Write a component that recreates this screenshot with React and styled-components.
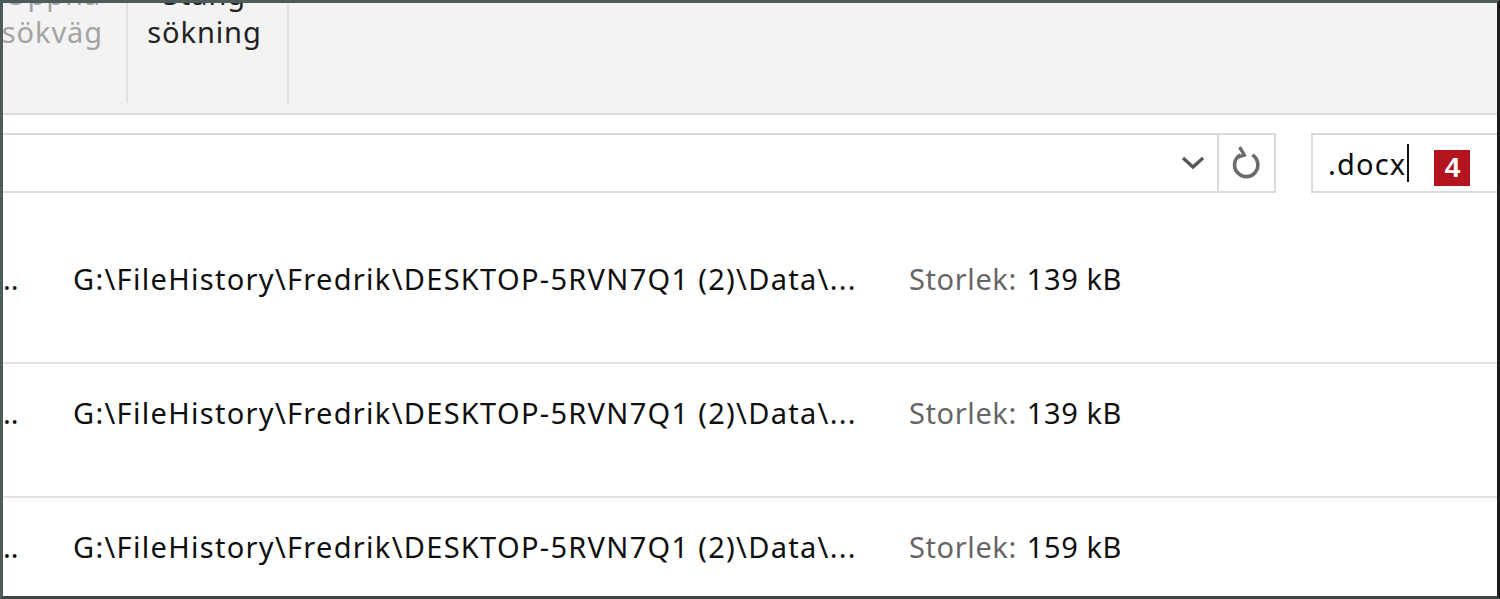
import React from 'react';
import styled, { createGlobalStyle } from 'styled-components';

const GlobalStyle = createGlobalStyle`
    html, body {
        margin: 0;
        padding: 0;
        background: #ffffff;
        overflow: hidden;
    }
`

const Window = styled.div`
    box-sizing: border-box;
    width: 1500px;
    height: 599px;
    border-top: 3px solid #4d5b5b;
    border-left: 3px solid #4d5b5b;
    border-right: 3px solid #1c1c1c;
    border-bottom: 3px solid #3c4747;
    overflow: hidden;
    display: flex;
    flex-direction: column;
    background: #ffffff;
    font-family: "Noto Sans", "Open Sans", sans-serif;
`

const Ribbon = styled.div`
    flex: 0 0 auto;
    height: 110px;
    background: #f3f3f3;
    border-bottom: 2px solid #dadada;
    display: flex;
    align-items: flex-start;
    overflow: hidden;
`

const RibbonGroup = styled.div`
    box-sizing: border-box;
    width: ${p => p.width}px;
    height: 100px;
    border-right: 2px solid #e1e1e1;
    display: flex;
    justify-content: ${p => (p.align === 'right' ? 'flex-end' : 'center')};
    padding-right: ${p => p.padRight || 0}px;
`

const RibbonLabel = styled.div`
    margin-top: -28px;
    font-size: 29px;
    letter-spacing: 0.9px;
    line-height: 38px;
    text-align: center;
    white-space: nowrap;
    color: ${p => (p.disabled ? '#a3a3a3' : '#222222')};
`

const Content = styled.div`
    flex: 1 1 auto;
    display: flex;
    flex-direction: column;
`

const AddressRow = styled.div`
    display: flex;
    align-items: stretch;
    margin-top: 18px;
    margin-left: -10px;
    height: 60px;
`

const AddressBox = styled.div`
    box-sizing: border-box;
    width: 1226px;
    border: 2px solid #dadada;
    display: flex;
    align-items: center;
    justify-content: flex-end;
    padding-right: 12px;
`

const RefreshButton = styled.div`
    box-sizing: border-box;
    width: 57px;
    border: 2px solid #dadada;
    border-left: none;
    display: flex;
    align-items: center;
    justify-content: center;
`

const SearchBox = styled.div`
    box-sizing: border-box;
    margin-left: 35px;
    flex: 1 1 auto;
    border: 2px solid #dadada;
    border-right: none;
    display: flex;
    align-items: center;
    padding-left: 15px;
`

const SearchText = styled.span`
    font-size: 29px;
    letter-spacing: 1.2px;
    color: #0d0d0d;
`

const Caret = styled.span`
    display: inline-block;
    width: 2px;
    height: 38px;
    background: #111;
    margin-left: 1px;
`

const Badge = styled.span`
    display: inline-flex;
    align-items: center;
    justify-content: center;
    width: 36px;
    height: 36px;
    margin-left: 25px;
    margin-top: 10px;
    background: #b3141d;
    color: #ffffff;
    font-family: "Liberation Sans", Arial, sans-serif;
    font-weight: 700;
    font-size: 28px;
`

const Rows = styled.div`
    margin-top: 37px;
`

const Row = styled.div`
    box-sizing: border-box;
    height: 134px;
    border-bottom: 2px solid #e3e3e3;
    display: flex;
    align-items: flex-start;
    padding-top: 31px;
    font-size: 29px;
    line-height: 36px;
    color: #0f0f0f;
    white-space: nowrap;
`

const Dots = styled.span`
    width: 70px;
    overflow: hidden;
`

const Path = styled.span`
    width: 836px;
    letter-spacing: 1.3px;
`

const Label = styled.span`
    color: #666666;
    letter-spacing: 0.6px;
    margin-right: 10px;
`

const Size = styled.span`
    letter-spacing: 0.6px;
`

const files = [
    { path: 'G:\\FileHistory\\Fredrik\\DESKTOP-5RVN7Q1 (2)\\Data\\...', size: '139 kB' },
    { path: 'G:\\FileHistory\\Fredrik\\DESKTOP-5RVN7Q1 (2)\\Data\\...', size: '139 kB' },
    { path: 'G:\\FileHistory\\Fredrik\\DESKTOP-5RVN7Q1 (2)\\Data\\...', size: '159 kB' },
];

function Chevron() {
    return (
        <svg width="24" height="14" viewBox="0 0 24 14">
            <polyline points="2,2 12,11 22,2" fill="none" stroke="#555" strokeWidth="3.2" />
        </svg>
    );
}

function RefreshIcon() {
    return (
        <svg width="32" height="36" viewBox="0 0 30 34">
            <path d="M20 9.5 A11 11 0 1 1 9 9.2" fill="none" stroke="#6b6b6b" strokeWidth="3.4" />
            <polyline points="8,2 12.5,9.5 5,12" fill="none" stroke="#6b6b6b" strokeWidth="3.2" />
        </svg>
    );
}

function App() {
    return (
        <Window>
            <GlobalStyle />
            <Ribbon>
                <RibbonGroup width={125} align="right" padRight={23}>
                    <RibbonLabel disabled>Öppna<br />sökväg</RibbonLabel>
                </RibbonGroup>
                <RibbonGroup width={161} padRight={6}>
                    <RibbonLabel>Stäng<br />sökning</RibbonLabel>
                </RibbonGroup>
            </Ribbon>
            <Content>
                <AddressRow>
                    <AddressBox>
                        <Chevron />
                    </AddressBox>
                    <RefreshButton>
                        <RefreshIcon />
                    </RefreshButton>
                    <SearchBox>
                        <SearchText>.docx</SearchText>
                        <Caret />
                        <Badge>4</Badge>
                    </SearchBox>
                </AddressRow>
                <Rows>
                    {files.map((f, i) => (
                        <Row key={i}>
                            <Dots>..</Dots>
                            <Path>{f.path}</Path>
                            <Label>Storlek:</Label>
                            <Size>{f.size}</Size>
                        </Row>
                    ))}
                </Rows>
            </Content>
        </Window>
    );
}

export default App;
